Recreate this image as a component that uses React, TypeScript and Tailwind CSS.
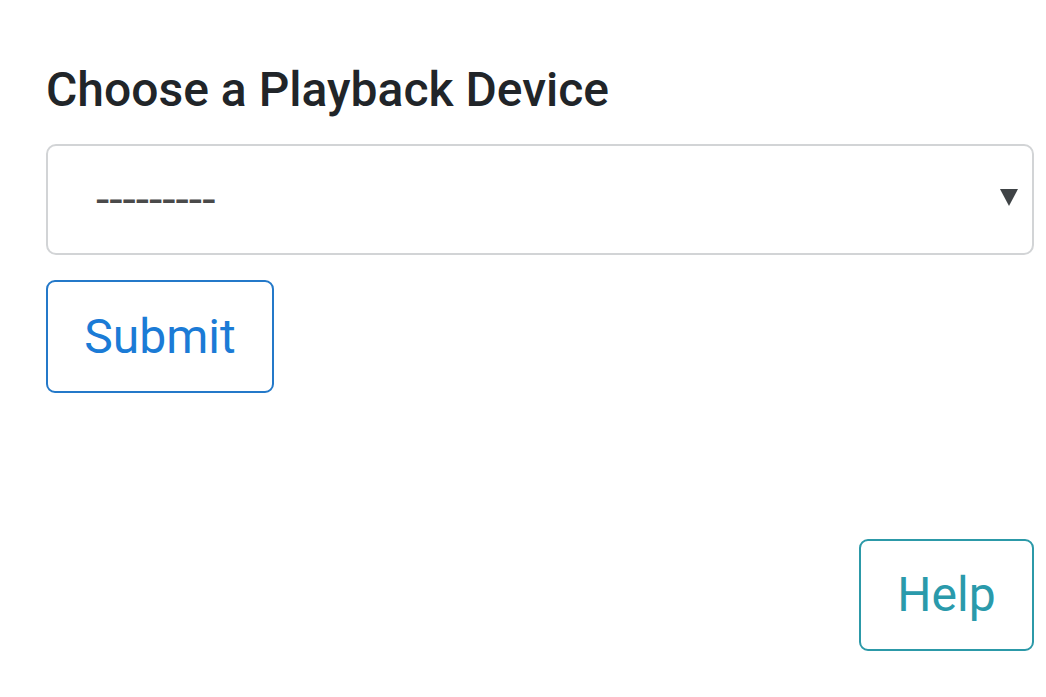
export default function App() {
  return (
    <div className="min-h-[697px] w-[1046px] bg-white pl-[46px] pr-[12px] pt-[61px] font-['Roboto',sans-serif]">
      <h1 className="text-[48px] font-medium leading-[58px] text-[#212529]">Choose a Playback Device</h1>

      <div className="mt-[25px] flex h-[111px] w-full items-center justify-between rounded-[10px] border-[2.5px] border-[#d2d4d6] pl-[48px] pr-[14px]">
        <span className="text-[48px] leading-none text-[#4a4a4a]">---------</span>
        <svg width="18" height="17" viewBox="0 0 18 17" className="mt-[-4px]">
          <polygon points="0,0 18,0 9,17" fill="#3f4346" />
        </svg>
      </div>

      <button className="mt-[25px] flex h-[113px] w-[228px] items-center justify-center rounded-[9px] border-[2.5px] border-[#2479c9] text-[48px] text-[#1b7bd6]">
        Submit
      </button>

      <div className="mt-[146px] flex justify-end">
        <button className="flex h-[112px] w-[175px] items-center justify-center rounded-[9px] border-[2.5px] border-[#2c99a8] text-[48px] text-[#2a9aab]">
          Help
        </button>
      </div>
    </div>
  );
}
